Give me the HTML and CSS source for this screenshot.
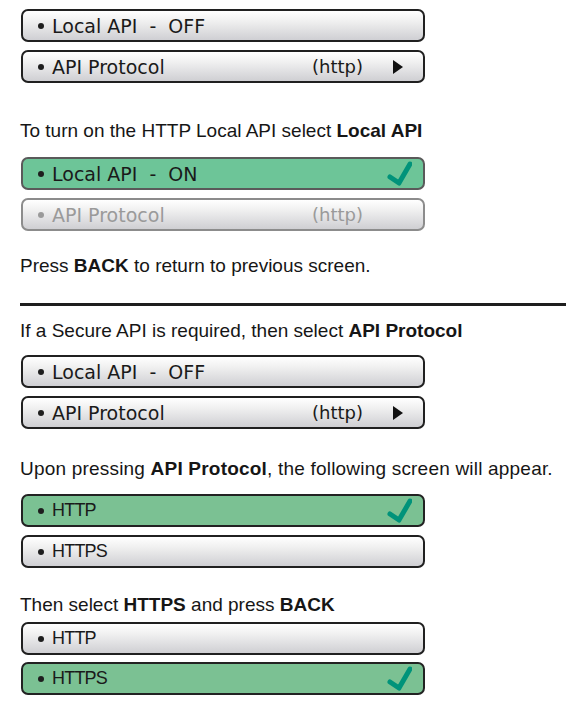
FILE: index.html
```html
<!DOCTYPE html>
<html lang="en">
<head>
    <meta charset="UTF-8">
    <meta name="viewport" content="width=device-width, initial-scale=1.0">
    <link rel="stylesheet" href="styles.css">
</head>
<body>
    <div class="menu first">
        <div class="item"><span class="dot"></span><span class="label">Local API&nbsp; -&nbsp; OFF</span></div>
        <div class="item"><span class="dot"></span><span class="label">API Protocol</span><span class="value">(http)</span><span class="arrow"></span></div>
    </div>

    <p class="note n1">To turn on the HTTP Local API select <b>Local API</b></p>

    <div class="menu m2">
        <div class="item on"><span class="dot"></span><span class="label">Local API&nbsp; -&nbsp; ON</span>
            <svg class="check" width="26" height="26" viewBox="0 0 26 26"><path d="M4 16 L13 22 L24 3"/></svg>
        </div>
        <div class="item off"><span class="dot"></span><span class="label">API Protocol</span><span class="value">(http)</span><span class="arrow blank"></span></div>
    </div>

    <p class="note n2">Press <b>BACK</b> to return to previous screen.</p>

    <div class="rule"></div>

    <p class="note n3">If a Secure API is required, then select <b>API Protocol</b></p>

    <div class="menu m3">
        <div class="item"><span class="dot"></span><span class="label">Local API&nbsp; -&nbsp; OFF</span></div>
        <div class="item"><span class="dot"></span><span class="label">API Protocol</span><span class="value">(http)</span><span class="arrow"></span></div>
    </div>

    <p class="note n4 wide">Upon pressing <b>API Protocol</b>, the following screen will appear.</p>

    <div class="menu m4 proto">
        <div class="item on dark"><span class="dot"></span><span class="label">HTTP</span>
            <svg class="check" width="26" height="26" viewBox="0 0 26 26"><path d="M4 16 L13 22 L24 3"/></svg>
        </div>
        <div class="item"><span class="dot"></span><span class="label">HTTPS</span></div>
    </div>

    <p class="note n5">Then select <b>HTTPS</b> and press <b>BACK</b></p>

    <div class="menu m5 proto">
        <div class="item"><span class="dot"></span><span class="label">HTTP</span></div>
        <div class="item on dark"><span class="dot"></span><span class="label">HTTPS</span>
            <svg class="check" width="26" height="26" viewBox="0 0 26 26"><path d="M4 16 L13 22 L24 3"/></svg>
        </div>
    </div>
</body>
</html>
```

FILE: styles.css
```css
*{
    padding: 0;
    margin: 0;
    box-sizing: border-box;
}
body{
    padding: 9px 0 0 20px;
    font-family: "Liberation Sans", Arial, sans-serif;
    color: #161616;
    background: white;
}
.menu{
    display: flex;
    flex-direction: column;
    gap: 8px;
    width: 404px;
    margin-left: 1px;
}
.item{
    height: 33px;
    display: flex;
    align-items: center;
    padding: 0 0 0 15px;
    border: 2px solid #202020;
    border-radius: 7px;
    background-image: linear-gradient(#ffffff, #f0f0f0 35%, #cfcfd3);
    font-family: "DejaVu Sans", sans-serif;
    font-size: 19px;
    color: #1a1a1a;
}
.proto .item{
    font-family: "Liberation Sans", Arial, sans-serif;
    font-size: 18px;
    letter-spacing: -0.8px;
}
.dot{
    width: 6px;
    height: 6px;
    border-radius: 50%;
    background: #1e1e1e;
    margin-right: 8px;
}
.value{
    margin-left: auto;
    margin-right: 30px;
    font-size: 18px;
}
.arrow{
    width: 0;
    height: 0;
    border-top: 7px solid transparent;
    border-bottom: 7px solid transparent;
    border-left: 10px solid #111;
    margin-right: 20px;
}
.arrow.blank{
    border-left-color: transparent;
}
.on{
    background: #6dc598;
    border-color: #5a5a5a;
}
.on.dark{
    background: #7bc193;
    border-color: #222;
}
.off{
    border-color: #8c8c8c;
    color: #9a9a9a;
}
.off .dot{
    background: #9a9a9a;
}
.check{
    margin-left: auto;
    margin-right: 11px;
}
.check path{
    fill: none;
    stroke: #00937a;
    stroke-width: 5;
    stroke-linecap: round;
    stroke-linejoin: round;
}
.note{
    font-size: 19px;
    line-height: 24px;
}
.wide{
    letter-spacing: 0.2px;
}
.n1{ margin-top: 36px; }
.m2{ margin-top: 14px; }
.n2{ margin-top: 23px; }
.rule{
    height: 3px;
    background: #1e1e1e;
    margin-top: 25px;
}
.n3{ margin-top: 13px; }
.m3{ margin-top: 12px; }
.n4{ margin-top: 28px; }
.m4{ margin-top: 13px; }
.n5{ margin-top: 25px; }
.m5{ margin-top: 5px; gap: 7px; }
```
